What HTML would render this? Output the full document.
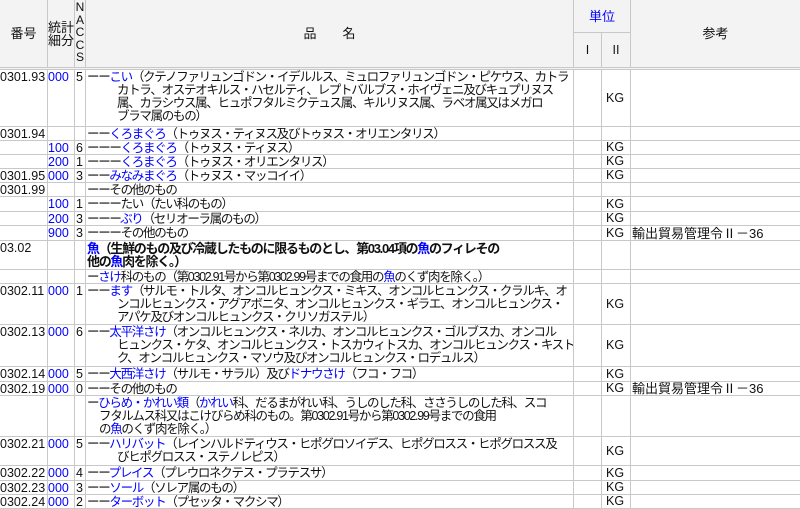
<!DOCTYPE html>
<html><head><meta charset="utf-8"><style>
*{margin:0;padding:0;box-sizing:border-box}
body{width:800px;height:500px;overflow:hidden;background:#fff;font-family:"Liberation Sans","Noto Sans CJK JP",sans-serif;font-size:12px;color:#111;position:relative}
.r{position:absolute;left:0;width:800px;border-bottom:1px solid #c8c8c8}
.c{position:absolute;top:0;bottom:0;border-right:1px solid #c8c8c8;white-space:nowrap;line-height:13px;overflow:hidden}
.a{left:0;width:48px;padding-top:1px;font-size:12.5px}
.b{left:48px;width:27px;color:#00f;padding-top:1px;padding-left:0px;font-size:12.5px}
.n{left:75px;width:11px;padding-top:1px;padding-left:1px;font-size:12.5px}
.d{left:86px;width:488px;padding-top:1px;padding-left:1px;letter-spacing:-1.3px;font-size:12.5px}
.u1{left:574px;width:28px}
.u2{left:602px;width:29px;display:flex;align-items:center;padding-left:4px;font-size:12.5px}
.rf{left:631px;width:169px;border-right:none;display:flex;align-items:center;padding-left:1px}
.i{padding-left:30px}
.bl{color:#00f}
.h{background:#f3f3f3}
.bo{font-weight:bold;font-size:13px}
</style></head><body>
<div class="r h" style="top:0;height:70px;border-bottom:3px double #c8c8c8">
 <div class="c" style="left:0;width:48px;display:flex;align-items:center;justify-content:center;font-size:13px">番号</div>
 <div class="c" style="left:48px;width:27px;display:flex;align-items:center;justify-content:center;line-height:13px;white-space:normal;text-align:center;font-size:13px">統計<br>細分</div>
 <div class="c" style="left:75px;width:11px;text-align:center;line-height:12.5px;padding-top:1px">N<br>A<br>C<br>C<br>S</div>
 <div class="c" style="left:86px;width:488px;display:flex;align-items:center;justify-content:center;font-size:13px">品&emsp;&emsp;名</div>
 <div class="c" style="left:574px;width:57px;height:33px;border-bottom:1px solid #c8c8c8;display:flex;align-items:center;justify-content:center;color:#00f;font-size:13px">単位</div>
 <div class="c" style="left:574px;width:28px;top:33px;display:flex;align-items:center;justify-content:center">Ⅰ</div>
 <div class="c" style="left:602px;width:29px;top:33px;display:flex;align-items:center;justify-content:center">Ⅱ</div>
 <div class="c" style="left:631px;width:169px;border-right:none;display:flex;align-items:center;justify-content:center;font-size:13px">参考</div>
</div>

<div class="r" style="top:70px;height:57px"><div class="c a">0301.93</div><div class="c b">000</div><div class="c n">5</div><div class="c d">ーー<span class="bl">こい</span>（クテノファリュンゴドン・イデルルス、ミュロファリュンゴドン・ピケウス、カトラ・<br><span class="i">カトラ、オステオキルス・ハセルティ、レプトバルブス・ホイヴェニ及びキュプリヌス</span><br><span class="i">属、カラシウス属、ヒュポフタルミクテュス属、キルリヌス属、ラベオ属又はメガロ</span><br><span class="i">ブラマ属のもの）</span></div><div class="c u1"></div><div class="c u2">KG</div><div class="c rf"></div></div>

<div class="r" style="top:127px;height:14px"><div class="c a">0301.94</div><div class="c b"></div><div class="c n"></div><div class="c d">ーー<span class="bl">くろまぐろ</span>（トゥヌス・ティヌス及びトゥヌス・オリエンタリス）</div><div class="c u1"></div><div class="c u2"></div><div class="c rf"></div></div>
<div class="r" style="top:141px;height:14px"><div class="c a"></div><div class="c b">100</div><div class="c n">6</div><div class="c d">ーーー<span class="bl">くろまぐろ</span>（トゥヌス・ティヌス）</div><div class="c u1"></div><div class="c u2">KG</div><div class="c rf"></div></div>
<div class="r" style="top:155px;height:14px"><div class="c a"></div><div class="c b">200</div><div class="c n">1</div><div class="c d">ーーー<span class="bl">くろまぐろ</span>（トゥヌス・オリエンタリス）</div><div class="c u1"></div><div class="c u2">KG</div><div class="c rf"></div></div>
<div class="r" style="top:169px;height:14px"><div class="c a">0301.95</div><div class="c b">000</div><div class="c n">3</div><div class="c d">ーー<span class="bl">みなみまぐろ</span>（トゥヌス・マッコイイ）</div><div class="c u1"></div><div class="c u2">KG</div><div class="c rf"></div></div>
<div class="r" style="top:183px;height:14px"><div class="c a">0301.99</div><div class="c b"></div><div class="c n"></div><div class="c d">ーーその他のもの</div><div class="c u1"></div><div class="c u2"></div><div class="c rf"></div></div>
<div class="r" style="top:197px;height:15px"><div class="c a"></div><div class="c b">100</div><div class="c n">1</div><div class="c d">ーーーたい（たい科のもの）</div><div class="c u1"></div><div class="c u2">KG</div><div class="c rf"></div></div>
<div class="r" style="top:212px;height:14px"><div class="c a"></div><div class="c b">200</div><div class="c n">3</div><div class="c d">ーーー<span class="bl">ぶり</span>（セリオーラ属のもの）</div><div class="c u1"></div><div class="c u2">KG</div><div class="c rf"></div></div>
<div class="r" style="top:226px;height:15px"><div class="c a"></div><div class="c b">900</div><div class="c n">3</div><div class="c d">ーーーその他のもの</div><div class="c u1"></div><div class="c u2">KG</div><div class="c rf" style="font-size:13px">輸出貿易管理令Ⅱ－36</div></div>

<div class="r" style="top:241px;height:29px"><div class="c a">03.02</div><div class="c b"></div><div class="c n"></div><div class="c d bo"><span class="bl">魚</span>（生鮮のもの及び冷蔵したものに限るものとし、第03.04項の<span class="bl">魚</span>のフィレその<br>他の<span class="bl">魚</span>肉を除く。）</div><div class="c u1"></div><div class="c u2"></div><div class="c rf"></div></div>
<div class="r" style="top:270px;height:14px"><div class="c a"></div><div class="c b"></div><div class="c n"></div><div class="c d">ー<span class="bl">さけ</span>科のもの（第0302.91号から第0302.99号までの食用の<span class="bl">魚</span>のくず肉を除く。）</div><div class="c u1"></div><div class="c u2"></div><div class="c rf"></div></div>

<div class="r" style="top:284px;height:41px"><div class="c a">0302.11</div><div class="c b">000</div><div class="c n">1</div><div class="c d">ーー<span class="bl">ます</span>（サルモ・トルタ、オンコルヒュンクス・ミキス、オンコルヒュンクス・クラルキ、オ<br><span class="i">ンコルヒュンクス・アグアボニタ、オンコルヒュンクス・ギラエ、オンコルヒュンクス・</span><br><span class="i">アパケ及びオンコルヒュンクス・クリソガステル）</span></div><div class="c u1"></div><div class="c u2">KG</div><div class="c rf"></div></div>
<div class="r" style="top:325px;height:42px"><div class="c a">0302.13</div><div class="c b">000</div><div class="c n">6</div><div class="c d">ーー<span class="bl">太平洋さけ</span>（オンコルヒュンクス・ネルカ、オンコルヒュンクス・ゴルブスカ、オンコル<br><span class="i">ヒュンクス・ケタ、オンコルヒュンクス・トスカウィトスカ、オンコルヒュンクス・キスト</span><br><span class="i">ク、オンコルヒュンクス・マソウ及びオンコルヒュンクス・ロデュルス）</span></div><div class="c u1"></div><div class="c u2">KG</div><div class="c rf"></div></div>
<div class="r" style="top:367px;height:15px"><div class="c a">0302.14</div><div class="c b">000</div><div class="c n">5</div><div class="c d">ーー<span class="bl">大西洋さけ</span>（サルモ・サラル）及び<span class="bl">ドナウさけ</span>（フコ・フコ）</div><div class="c u1"></div><div class="c u2">KG</div><div class="c rf"></div></div>
<div class="r" style="top:382px;height:14px"><div class="c a">0302.19</div><div class="c b">000</div><div class="c n">0</div><div class="c d">ーーその他のもの</div><div class="c u1"></div><div class="c u2">KG</div><div class="c rf" style="font-size:13px">輸出貿易管理令Ⅱ－36</div></div>
<div class="r" style="top:396px;height:41px"><div class="c a"></div><div class="c b"></div><div class="c n"></div><div class="c d">ー<span class="bl">ひらめ・かれい類</span>（<span class="bl">かれい</span>科、だるまがれい科、うしのした科、ささうしのした科、スコ<br><span style="padding-left:12px">フタルムス科又はこけびらめ科のもの。第0302.91号から第0302.99号までの食用</span><br><span style="padding-left:12px">の<span class="bl">魚</span>のくず肉を除く。）</span></div><div class="c u1"></div><div class="c u2"></div><div class="c rf"></div></div>
<div class="r" style="top:437px;height:29px"><div class="c a">0302.21</div><div class="c b">000</div><div class="c n">5</div><div class="c d">ーー<span class="bl">ハリバット</span>（レインハルドティウス・ヒポグロソイデス、ヒポグロスス・ヒポグロスス及<br><span class="i">びヒポグロスス・ステノレピス）</span></div><div class="c u1"></div><div class="c u2">KG</div><div class="c rf"></div></div>
<div class="r" style="top:466px;height:15px"><div class="c a">0302.22</div><div class="c b">000</div><div class="c n">4</div><div class="c d">ーー<span class="bl">プレイス</span>（プレウロネクテス・プラテスサ）</div><div class="c u1"></div><div class="c u2">KG</div><div class="c rf"></div></div>
<div class="r" style="top:481px;height:14px"><div class="c a">0302.23</div><div class="c b">000</div><div class="c n">3</div><div class="c d">ーー<span class="bl">ソール</span>（ソレア属のもの）</div><div class="c u1"></div><div class="c u2">KG</div><div class="c rf"></div></div>
<div class="r" style="top:495px;height:14px"><div class="c a">0302.24</div><div class="c b">000</div><div class="c n">2</div><div class="c d">ーー<span class="bl">ターボット</span>（プセッタ・マクシマ）</div><div class="c u1"></div><div class="c u2">KG</div><div class="c rf"></div></div>
</body></html>
